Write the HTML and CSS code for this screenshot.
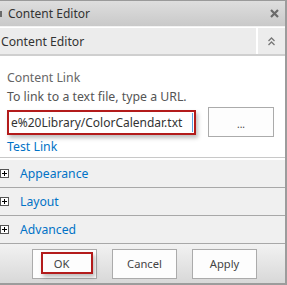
FILE: index.html
```html
<!DOCTYPE html>
<html>
<head>
<meta charset="utf-8">
<link rel="stylesheet" href="styles.css">
</head>
<body>
<div class="panel">
  <div class="titlebar">
    <span class="grip"></span>
    <span class="title">Content Editor</span>
    <svg class="close" width="9" height="9" viewBox="0 0 9 9"><path d="M1 1 L8 8 M8 1 L1 8" stroke="#6a6a6a" stroke-width="2.2"/></svg>
  </div>
  <div class="header">
    <div class="header-title">Content Editor</div>
    <div class="header-toggle">
      <svg width="9" height="11" viewBox="0 0 9 11"><path d="M1.5 5 L4.5 2 L7.5 5 M1.5 9 L4.5 6 L7.5 9" fill="none" stroke="#777" stroke-width="1.3"/></svg>
    </div>
  </div>
  <div class="content">
    <div class="label">Content Link</div>
    <div class="hint">To link to a text file, type a URL.</div>
    <div class="link-row">
      <div class="input">e%20Library/ColorCalendar.txt<span class="caret"></span></div>
      <div class="browse">...</div>
    </div>
    <div class="test-link">Test Link</div>
  </div>
  <div class="sections">
    <div class="section"><span class="plus"></span><span class="section-name">Appearance</span></div>
    <div class="section"><span class="plus"></span><span class="section-name">Layout</span></div>
    <div class="section"><span class="plus"></span><span class="section-name">Advanced</span></div>
  </div>
  <div class="buttons">
    <div class="btn ok">OK<span class="ok-mark"></span></div>
    <div class="btn">Cancel</div>
    <div class="btn">Apply</div>
  </div>
</div>
</body>
</html>
```
FILE: styles.css
```css
html, body {
  margin: 0;
  padding: 0;
  background: #ffffff;
}
body {
  width: 287px;
  height: 285px;
  overflow: hidden;
  font-family: "Noto Sans", "Open Sans", sans-serif;
  font-size: 12.3px;
  color: #444;
}
.panel {
  width: 287px;
  height: 285px;
  box-sizing: border-box;
  border-right: 2px solid #9c9c9c;
  display: flex;
  flex-direction: column;
}
.titlebar {
  height: 25px;
  flex: none;
  border-top: 1px solid #9a9a9a;
  background: linear-gradient(#dedede, #c9c9c9);
  display: flex;
  align-items: center;
  border-bottom: 1px solid #f2f2f2;
}
.grip {
  width: 2px;
  height: 6px;
  background: #6a6a6a;
}
.title {
  margin-left: 6px;
  color: #333;
  font-size: 12px;
  flex: 1;
}
.close {
  margin-right: 6px;
  margin-bottom: 1px;
}
.header {
  height: 26px;
  flex: none;
  display: flex;
  border-bottom: 2px solid #cfcfcf;
  margin-top: 1px;
}
.header-title {
  flex: 1;
  background: #ececec;
  display: flex;
  align-items: center;
  padding-left: 1px;
  color: #333;
  font-size: 12.2px;
}
.header-toggle {
  width: 27px;
  margin-left: 2px;
  background: #ececec;
  display: flex;
  align-items: center;
  justify-content: center;
}
.content {
  flex: none;
  padding: 12px 0 0 7px;
  height: 89px;
  border-bottom: 1px solid #c8c8c8;
}
.label {
  color: #666;
  height: 19px;
  line-height: 19px;
}
.hint {
  color: #555;
  height: 19px;
  line-height: 19px;
}
.link-row {
  display: flex;
  align-items: center;
  margin-top: 1px;
  height: 30px;
}
.input {
  width: 183px;
  height: 21px;
  border: 2px solid #b31b1b;
  box-shadow: 2px 3px 4px rgba(0,0,0,0.25);
  display: flex;
  align-items: center;
  padding-left: 2px;
  color: #333;
  font-size: 12px;
  position: relative;
  white-space: nowrap;
  overflow: hidden;
}
.caret {
  width: 1px;
  height: 19px;
  background: #5aa0e0;
  position: absolute;
  right: 1px;
  top: 1px;
}
.browse {
  margin-left: 12px;
  width: 66px;
  height: 30px;
  border: 1px solid #ababab;
  background: #fdfdfd;
  display: flex;
  align-items: center;
  justify-content: center;
  padding-top: 4px;
  box-sizing: border-box;
  color: #444;
  font-size: 10px;
}
.test-link {
  color: #0072c6;
  margin-top: 1px;
  font-size: 12.3px;
  line-height: 18px;
}
.sections {
  flex: none;
  margin-top: 2px;
}
.section {
  height: 27px;
  background: #f0f0f0;
  border-bottom: 1px solid #a8a8a8;
  display: flex;
  align-items: center;
}
.plus {
  width: 7px;
  height: 7px;
  border: 1px solid #555;
  background: #fff;
  position: relative;
}
.plus::before {
  content: "";
  position: absolute;
  left: 1px;
  top: 3px;
  width: 5px;
  height: 1px;
  background: #000;
}
.plus::after {
  content: "";
  position: absolute;
  left: 3px;
  top: 1px;
  width: 1px;
  height: 5px;
  background: #000;
}
.section-name {
  margin-left: 11px;
  color: #0072c6;
  font-size: 12.2px;
}
.buttons {
  flex: 1;
  background: linear-gradient(#f2f2f2, #d8d8d8);
  border-bottom: 2px solid #9c9c9c;
  display: flex;
  align-items: center;
  padding-left: 32px;
  gap: 15px;
}
.btn {
  width: 65px;
  height: 30px;
  box-sizing: border-box;
  border: 1px solid #ababab;
  background: #fdfdfd;
  display: flex;
  align-items: center;
  justify-content: center;
  color: #444;
  font-size: 11.2px;
}
.ok {
  position: relative;
  padding-right: 6px;
}
.ok-mark {
  position: absolute;
  left: 8px;
  top: 2px;
  width: 48px;
  height: 18px;
  border: 2px solid #b31b1b;
  box-shadow: 2px 3px 4px rgba(0,0,0,0.25);
}
```
